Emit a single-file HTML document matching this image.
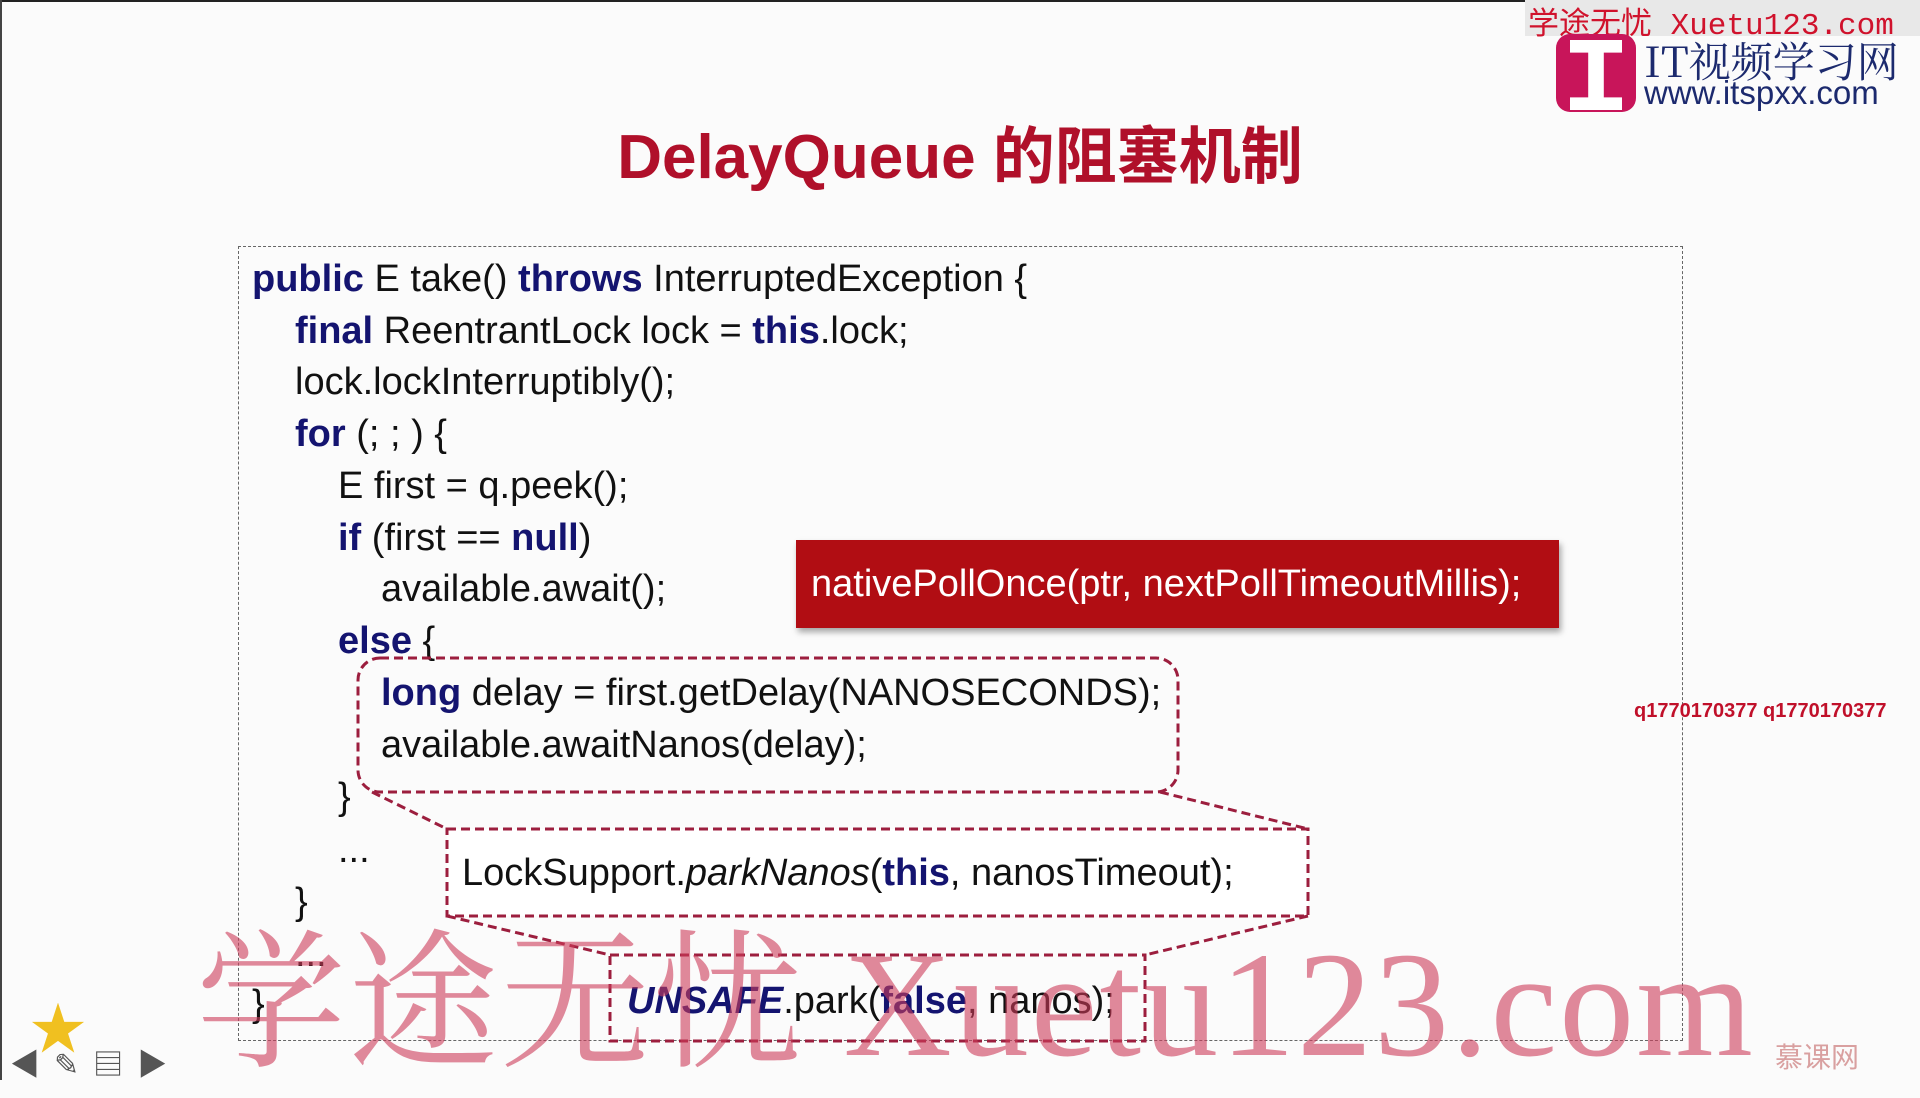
<!DOCTYPE html>
<html><head><meta charset="utf-8"><style>
body{margin:0;width:1920px;height:1080px;background:#fbfbfb;position:relative;overflow:hidden;font-family:"Liberation Sans","Noto Sans CJK SC",sans-serif;}
.a{position:absolute;white-space:nowrap;}
.code{font-size:38px;color:#111;letter-spacing:0px;line-height:40px;}
.k{color:#141470;font-weight:bold;}
</style></head><body>
<div class="a" style="left:0;top:0;width:1920px;height:2px;background:#222"></div>
<div class="a" style="left:0;top:0;width:2px;height:1080px;background:#444"></div>
<div class="a" style="left:1525px;top:0;width:395px;height:36px;background:#e8e8e8"></div>
<div class="a" style="left:1528px;top:-2px;font-size:31px;color:#d0122c;font-family:'Liberation Mono','Noto Sans CJK SC',monospace;">学途无忧 Xuetu123.com</div>
<div class="a" style="left:1556px;top:34px;width:80px;height:78px;background:#c8155a;border-radius:14px"></div>
<div class="a" style="left:1570px;top:40px;width:52px;height:70px;background:#fff;clip-path:polygon(0 0,100% 0,100% 18%,65% 18%,65% 82%,100% 82%,100% 100%,0 100%,0 82%,35% 82%,35% 18%,0 18%)"></div>
<div class="a" style="left:1644px;top:30px;font-size:42px;color:#1c2a6e;font-family:'Noto Serif CJK SC',serif;">IT视频学习网</div>
<div class="a" style="left:1644px;top:74px;font-size:33px;color:#1c2a6e;">www.itspxx.com</div>

<div class="a" style="left:0;width:1920px;top:106px;text-align:center;font-size:62px;font-weight:bold;color:#b0102a;">DelayQueue 的阻塞机制</div>

<div class="a" style="left:238px;top:246px;width:1443px;height:793px;border:1.5px dashed #666"></div>

<div class="a code" style="left:252px;top:259px"><span class="k">public</span> E take() <span class="k">throws</span> InterruptedException {</div>
<div class="a code" style="left:295px;top:311px"><span class="k">final</span> ReentrantLock lock = <span class="k">this</span>.lock;</div>
<div class="a code" style="left:295px;top:362px">lock.lockInterruptibly();</div>
<div class="a code" style="left:295px;top:414px"><span class="k">for</span> (; ; ) {</div>
<div class="a code" style="left:338px;top:466px">E first = q.peek();</div>
<div class="a code" style="left:338px;top:518px"><span class="k">if</span> (first == <span class="k">null</span>)</div>
<div class="a code" style="left:381px;top:569px">available.await();</div>
<div class="a code" style="left:338px;top:621px"><span class="k">else</span> {</div>
<div class="a code" style="left:381px;top:673px"><span class="k">long</span> delay = first.getDelay(NANOSECONDS);</div>
<div class="a code" style="left:381px;top:725px">available.awaitNanos(delay);</div>
<div class="a code" style="left:338px;top:777px">}</div>
<div class="a code" style="left:338px;top:830px">...</div>
<div class="a code" style="left:295px;top:882px">}</div>
<div class="a code" style="left:295px;top:934px">...</div>
<div class="a code" style="left:252px;top:984px">}</div>

<div class="a" style="left:796px;top:540px;width:763px;height:88px;background:#b10d13;box-shadow:2px 4px 6px rgba(0,0,0,.35)"></div>
<div class="a code" style="left:811px;top:564px;color:#fff">nativePollOnce(ptr, nextPollTimeoutMillis);</div>

<svg class="a" style="left:0;top:0" width="1920" height="1080">
<g fill="none" stroke="#9c1e3e" stroke-width="3" stroke-dasharray="9,5">
<rect x="358" y="658" width="820" height="134" rx="22"/>
<rect x="447" y="829" width="861" height="87" fill="#fff"/>
<rect x="610" y="955" width="535" height="86"/>
<path d="M372 792 L447 829 M1160 792 L1308 829 M447 916 L610 955 M1308 916 L1145 955"/>
</g>
</svg>
<div class="a code" style="left:462px;top:853px">LockSupport.<i>parkNanos</i>(<span class="k">this</span>, nanosTimeout);</div>
<div class="a code" style="left:627px;top:981px"><i class="k">UNSAFE</i>.park(<span class="k">false</span>, nanos);</div>

<div class="a" style="left:1634px;top:700px;font-size:20px;font-weight:bold;color:#c0102a">q1770170377 q1770170377</div>

<div class="a" style="left:196px;top:882px;font-size:150px;color:rgba(205,60,90,.6);font-family:'Liberation Serif','Noto Serif CJK SC',serif;letter-spacing:2px">学途无忧 Xuetu123.com</div>

<div class="a" style="left:30px;top:985px;font-size:56px;color:#f0c020">★</div>
<div class="a" style="left:10px;top:1040px;font-size:30px;color:#555;letter-spacing:14px">◀✎▤▶</div>
<div class="a" style="left:1775px;top:1036px;font-size:28px;color:#d9a0a0">慕课网</div>
</body></html>
